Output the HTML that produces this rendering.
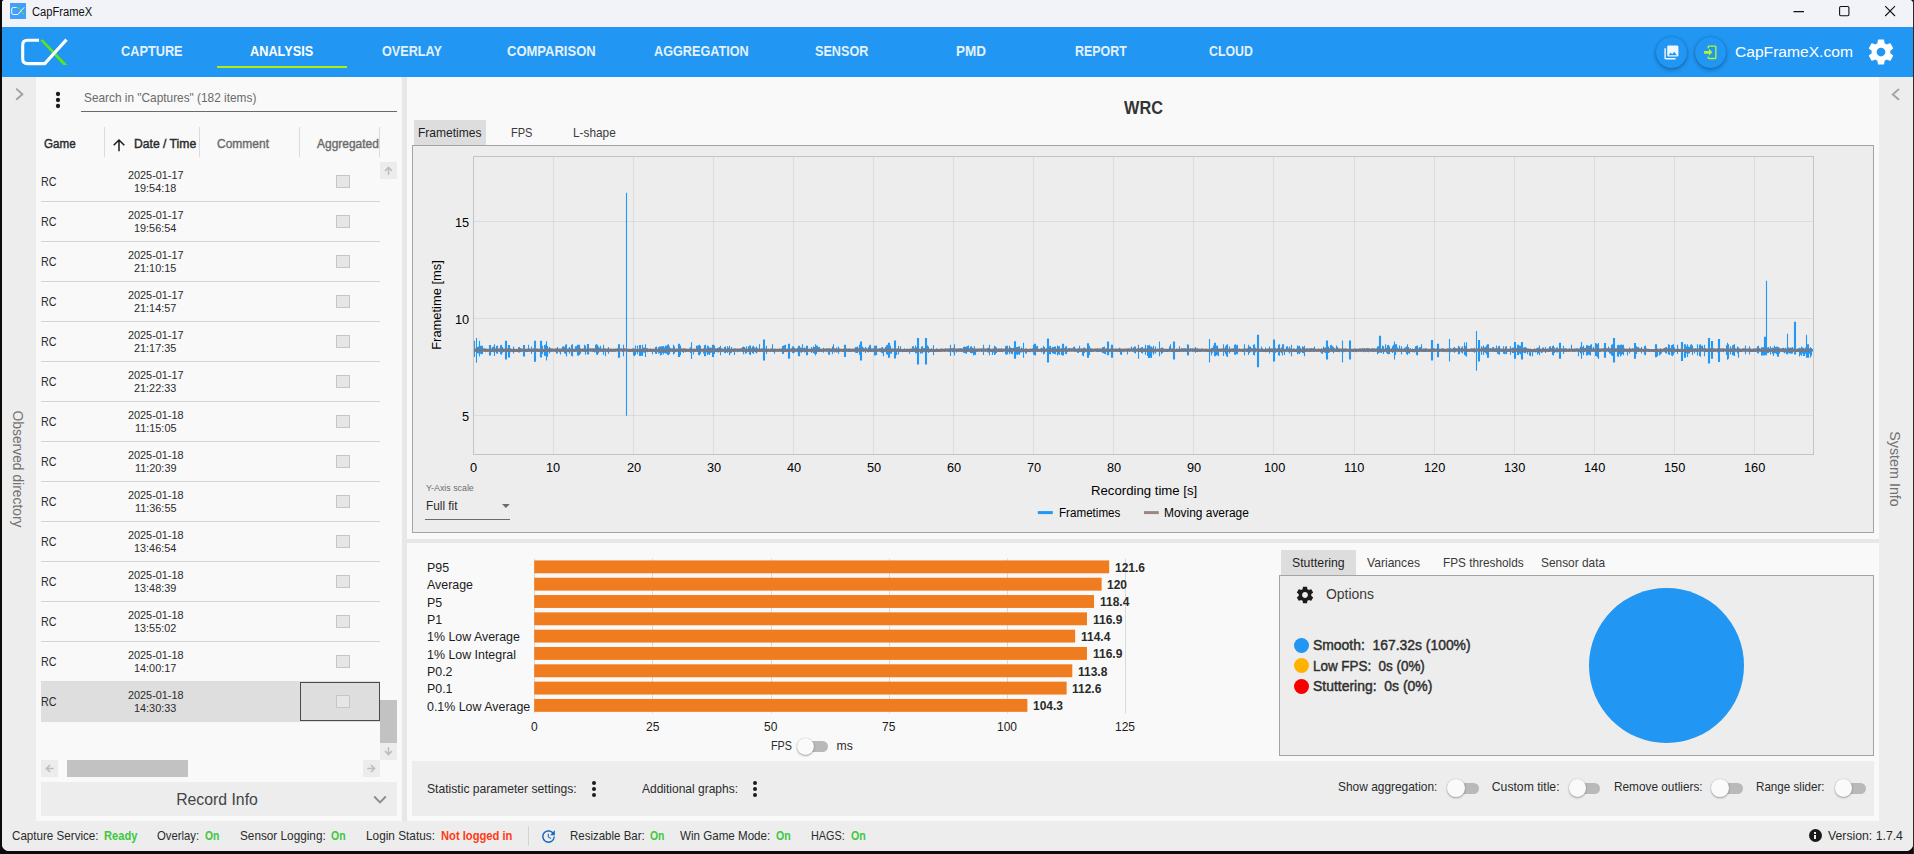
<!DOCTYPE html>
<html><head><meta charset="utf-8"><title>CapFrameX</title>
<style>
html,body{margin:0;padding:0;}
body{width:1914px;height:854px;overflow:hidden;background:#0d0b0a;font-family:"Liberation Sans",sans-serif;position:relative;}
#win{position:absolute;left:2px;top:0;width:1911px;height:851px;background:#f9f9f9;border-radius:3px 4px 7px 7px;overflow:hidden;}
#root{position:absolute;left:-2px;top:0;width:1914px;height:854px;}
.b{position:absolute;box-sizing:border-box;}
.t{position:absolute;white-space:pre;line-height:1;transform-origin:0 0;}
svg{position:absolute;overflow:visible;}
</style></head><body><div class="b" style="left:1913px;top:0;width:1px;height:854px;background:#2c2a26"></div><div id="win"><div id="root">

<div class="b" style="left:0px;top:0px;width:1914px;height:27px;background:#f1f3f8;"></div>
<div class="b" style="left:10px;top:3px;width:16px;height:16px;background:#429ffb;"></div>
<svg style="left:10px;top:3px" width="16" height="16" viewBox="0 0 16 16"><path d="M7.2 4.6l.9-.1 5.9 7" fill="none" stroke="#63e02a" stroke-width="1.150"/><path d="M6.6 4.500H3.300Q1.700 4.500 1.700 6v4q0 1.500 1.600 1.500h4.600L14.200 4.300" fill="none" stroke="#fff" stroke-width="0.950"/></svg>
<span class="t" style="left:32.20px;top:6.00px;font-size:12px;color:#111;transform:scaleX(0.9290);">CapFrameX</span>
<svg style="left:1780px;top:0" width="134" height="27" viewBox="0 0 134 27"><g fill="none" stroke="#111" stroke-width="1.1"><path d="M13.5 11.6h10.5"/><rect x="59.6" y="6.5" width="9.3" height="9.3" rx="1.2"/><path d="M105.2 6.2l9.8 9.8M115 6.2l-9.8 9.8"/></g></svg>
<div class="b" style="left:0px;top:27px;width:1914px;height:50px;background:#2196f3;"></div>
<svg style="left:0;top:27px" width="90" height="50" viewBox="0 27 90 50"><path d="M40.3 40.6l2.3-1.3 24.8 25.6h-4.2z" fill="#5be51e"/><path d="M39 40.2H27.5q-4.8 0-4.8 4.8v13.8q0 4.8 4.8 4.8h17.3L66.5 39.6" fill="none" stroke="#fff" stroke-width="3.1" stroke-linejoin="miter"/></svg>
<span class="t" style="left:121.40px;top:44.00px;font-size:14.6px;color:#e3f1fd;font-weight:bold;transform:scaleX(0.8729);">CAPTURE</span>
<span class="t" style="left:250.20px;top:44.00px;font-size:14.6px;color:#fff;font-weight:bold;transform:scaleX(0.8719);">ANALYSIS</span>
<span class="t" style="left:381.60px;top:44.00px;font-size:14.6px;color:#e3f1fd;font-weight:bold;transform:scaleX(0.8651);">OVERLAY</span>
<span class="t" style="left:507.00px;top:44.00px;font-size:14.6px;color:#e3f1fd;font-weight:bold;transform:scaleX(0.8915);">COMPARISON</span>
<span class="t" style="left:654.00px;top:44.00px;font-size:14.6px;color:#e3f1fd;font-weight:bold;transform:scaleX(0.8670);">AGGREGATION</span>
<span class="t" style="left:814.60px;top:44.00px;font-size:14.6px;color:#e3f1fd;font-weight:bold;transform:scaleX(0.8660);">SENSOR</span>
<span class="t" style="left:956.00px;top:44.00px;font-size:14.6px;color:#e3f1fd;font-weight:bold;transform:scaleX(0.9246);">PMD</span>
<span class="t" style="left:1074.80px;top:44.00px;font-size:14.6px;color:#e3f1fd;font-weight:bold;transform:scaleX(0.8514);">REPORT</span>
<span class="t" style="left:1208.60px;top:44.00px;font-size:14.6px;color:#e3f1fd;font-weight:bold;transform:scaleX(0.8438);">CLOUD</span>
<div class="b" style="left:217px;top:66px;width:130px;height:2px;background:#b0ec12;"></div>
<div class="b" style="left:1655.5px;top:36.700px;width:31px;height:31px;border-radius:15.500px;background:#2196f3;box-shadow:0 1.500px 4.500px rgba(0,0,0,.32),0 0 1.500px rgba(0,0,0,.18)"></div>
<div class="b" style="left:1694.5px;top:36.700px;width:31px;height:31px;border-radius:15.500px;background:#2196f3;box-shadow:0 1.500px 4.500px rgba(0,0,0,.32),0 0 1.500px rgba(0,0,0,.18)"></div>
<svg style="left:1662.600px;top:43.600px" width="16.800" height="16.800" viewBox="0 0 24 24"><path fill="#f2f8ff" d="M22 16V4c0-1.100-.9-2-2-2H8c-1.100 0-2 .9-2 2v12c0 1.100.9 2 2 2h12c1.100 0 2-.9 2-2zm-11-4l2.030 2.710L16 11l4 5H8l3-4zM2 6v14c0 1.100.9 2 2 2h14v-2H4V6H2z"/></svg>
<svg style="left:1701.700px;top:43.700px" width="16.600" height="16.600" viewBox="0 0 24 24"><path fill="#b6f52a" d="M10 17v-3H3v-4h7V7l5 5-5 5M10 2h9a2 2 0 0 1 2 2v16a2 2 0 0 1-2 2h-9a2 2 0 0 1-2-2v-2h2v2h9V4h-9v2H8V4a2 2 0 0 1 2-2z"/></svg>
<span class="t" style="left:1734.90px;top:44.00px;font-size:15.2px;color:#fff;transform:scaleX(1.0272);">CapFrameX.com</span>
<svg style="left:1866px;top:37px" width="30" height="30" viewBox="0 0 24 24"><path fill="#fff" d="M19.430 12.980c.040-.320.070-.640.070-.980s-.030-.660-.070-.980l2.110-1.650c.190-.150.240-.420.120-.640l-2-3.460c-.120-.220-.390-.300-.610-.220l-2.490 1c-.520-.400-1.080-.730-1.690-.980l-.380-2.650C14.460 2.180 14.250 2 14 2h-4c-.250 0-.460.180-.490.420l-.380 2.650c-.610.250-1.170.590-1.690.980l-2.490-1c-.230-.090-.490 0-.610.220l-2 3.460c-.130.220-.070.490.120.640l2.110 1.650c-.040.320-.070.650-.070.980s.030.660.070.980l-2.110 1.650c-.190.150-.240.420-.120.640l2 3.460c.120.220.390.300.610.220l2.490-1c.520.400 1.080.730 1.690.980l.380 2.650c.030.240.240.420.490.420h4c.250 0 .460-.180.490-.420l.380-2.650c.610-.250 1.170-.590 1.690-.980l2.490 1c.230.090.490 0 .610-.220l2-3.460c.120-.220.070-.490-.120-.640l-2.110-1.650zM12 15.500c-1.930 0-3.500-1.570-3.500-3.500s1.570-3.500 3.500-3.500 3.500 1.570 3.500 3.500-1.570 3.500-3.500 3.500z"/></svg>
<div class="b" style="left:0px;top:77px;width:36px;height:744px;background:#ededed;"></div>
<div class="b" style="left:1879px;top:77px;width:35px;height:744px;background:#ededed;"></div>
<svg style="left:0;top:77px" width="36" height="40" viewBox="0 77 36 40"><path d="M16.200 88.600l6.200 5.600-6.200 5.600" fill="none" stroke="#a2a2a2" stroke-width="1.9"/></svg>
<svg style="left:1879px;top:77px" width="35" height="40" viewBox="1879 77 35 40"><path d="M1899 89l-6.200 5.400 6.200 5.400" fill="none" stroke="#a2a2a2" stroke-width="1.9"/></svg>
<span class="t" style="left:18.300px;top:468.900px;font-size:14px;color:#727272;transform:translate(-50%,-50%) rotate(90deg) scaleX(0.989);transform-origin:50% 50%;">Observed directory</span>
<span class="t" style="left:1894.500px;top:469px;font-size:14px;color:#727272;transform:translate(-50%,-50%) rotate(90deg) scaleX(1.022);transform-origin:50% 50%;">System Info</span>
<div class="b" style="left:402px;top:77px;width:5px;height:744px;background:#e7e7e7;"></div>
<div class="b" style="left:407px;top:539px;width:1472px;height:4px;background:#e7e7e7;"></div>
<div class="b" style="left:0px;top:821px;width:1914px;height:33px;background:#ededed;"></div>
<svg style="left:54px;top:90px" width="8" height="8"><circle cx="4" cy="4" r="2.150" fill="#1c1c1c"/></svg>
<svg style="left:54px;top:96px" width="8" height="8"><circle cx="4" cy="4" r="2.150" fill="#1c1c1c"/></svg>
<svg style="left:54px;top:102px" width="8" height="8"><circle cx="4" cy="4" r="2.150" fill="#1c1c1c"/></svg>
<span class="t" style="left:84.00px;top:92.00px;font-size:12.2px;color:#6a6a6a;transform:scaleX(0.9718);">Search in "Captures" (182 items)</span>
<div class="b" style="left:81px;top:111px;width:316px;height:1px;background:#6b6b6b;"></div>
<div class="b" style="left:104px;top:127px;width:1px;height:30px;background:#dcdcdc;"></div>
<div class="b" style="left:199px;top:127px;width:1px;height:30px;background:#dcdcdc;"></div>
<div class="b" style="left:299px;top:127px;width:1px;height:30px;background:#dcdcdc;"></div>
<div class="b" style="left:379px;top:127px;width:1px;height:30px;background:#dcdcdc;"></div>
<span class="t" style="left:43.50px;top:138.00px;font-size:12.1px;color:#2b2b2b;transform:scaleX(0.9620);-webkit-text-stroke:0.400px #2b2b2b;">Game</span>
<svg style="left:112.300px;top:137.500px" width="14" height="14" viewBox="0 0 14 14"><path d="M7 13.200V2.200M1.700 7.300L7 2l5.300 5.300" fill="none" stroke="#1c1c1c" stroke-width="1.500"/></svg>
<span class="t" style="left:133.60px;top:138.00px;font-size:12.1px;color:#2b2b2b;transform:scaleX(1.0054);-webkit-text-stroke:0.400px #2b2b2b;">Date / Time</span>
<span class="t" style="left:216.50px;top:138.00px;font-size:12.1px;color:#6c6c6c;transform:scaleX(0.9914);-webkit-text-stroke:0.400px #6c6c6c;">Comment</span>
<span class="t" style="left:316.60px;top:138.00px;font-size:12.1px;color:#6c6c6c;transform:scaleX(0.9893);-webkit-text-stroke:0.400px #6c6c6c;">Aggregated</span>
<div class="b" style="left:41px;top:201px;width:339px;height:1px;background:#d4d4d4;"></div>
<span class="t" style="left:40.70px;top:176.00px;font-size:12.6px;color:#2b2b2b;transform:scaleX(0.8517);">RC</span>
<span class="t" style="left:127.51px;top:170.00px;font-size:10.6px;color:#2b2b2b;transform:scaleX(1.0250);">2025-01-17</span>
<span class="t" style="left:134.15px;top:183.00px;font-size:10.6px;color:#2b2b2b;transform:scaleX(1.0250);">19:54:18</span>
<div class="b" style="left:336px;top:175px;width:14px;height:13px;background:#e6e6e6;border:1px solid #c6c6c6;"></div>
<div class="b" style="left:41px;top:241px;width:339px;height:1px;background:#d4d4d4;"></div>
<span class="t" style="left:40.70px;top:216.00px;font-size:12.6px;color:#2b2b2b;transform:scaleX(0.8517);">RC</span>
<span class="t" style="left:127.51px;top:210.00px;font-size:10.6px;color:#2b2b2b;transform:scaleX(1.0250);">2025-01-17</span>
<span class="t" style="left:134.15px;top:223.00px;font-size:10.6px;color:#2b2b2b;transform:scaleX(1.0250);">19:56:54</span>
<div class="b" style="left:336px;top:215px;width:14px;height:13px;background:#e6e6e6;border:1px solid #c6c6c6;"></div>
<div class="b" style="left:41px;top:281px;width:339px;height:1px;background:#d4d4d4;"></div>
<span class="t" style="left:40.70px;top:256.00px;font-size:12.6px;color:#2b2b2b;transform:scaleX(0.8517);">RC</span>
<span class="t" style="left:127.51px;top:250.00px;font-size:10.6px;color:#2b2b2b;transform:scaleX(1.0250);">2025-01-17</span>
<span class="t" style="left:134.15px;top:263.00px;font-size:10.6px;color:#2b2b2b;transform:scaleX(1.0250);">21:10:15</span>
<div class="b" style="left:336px;top:255px;width:14px;height:13px;background:#e6e6e6;border:1px solid #c6c6c6;"></div>
<div class="b" style="left:41px;top:321px;width:339px;height:1px;background:#d4d4d4;"></div>
<span class="t" style="left:40.70px;top:296.00px;font-size:12.6px;color:#2b2b2b;transform:scaleX(0.8517);">RC</span>
<span class="t" style="left:127.51px;top:290.00px;font-size:10.6px;color:#2b2b2b;transform:scaleX(1.0250);">2025-01-17</span>
<span class="t" style="left:134.15px;top:303.00px;font-size:10.6px;color:#2b2b2b;transform:scaleX(1.0250);">21:14:57</span>
<div class="b" style="left:336px;top:295px;width:14px;height:13px;background:#e6e6e6;border:1px solid #c6c6c6;"></div>
<div class="b" style="left:41px;top:361px;width:339px;height:1px;background:#d4d4d4;"></div>
<span class="t" style="left:40.70px;top:336.00px;font-size:12.6px;color:#2b2b2b;transform:scaleX(0.8517);">RC</span>
<span class="t" style="left:127.51px;top:330.00px;font-size:10.6px;color:#2b2b2b;transform:scaleX(1.0250);">2025-01-17</span>
<span class="t" style="left:134.15px;top:343.00px;font-size:10.6px;color:#2b2b2b;transform:scaleX(1.0250);">21:17:35</span>
<div class="b" style="left:336px;top:335px;width:14px;height:13px;background:#e6e6e6;border:1px solid #c6c6c6;"></div>
<div class="b" style="left:41px;top:401px;width:339px;height:1px;background:#d4d4d4;"></div>
<span class="t" style="left:40.70px;top:376.00px;font-size:12.6px;color:#2b2b2b;transform:scaleX(0.8517);">RC</span>
<span class="t" style="left:127.51px;top:370.00px;font-size:10.6px;color:#2b2b2b;transform:scaleX(1.0250);">2025-01-17</span>
<span class="t" style="left:134.15px;top:383.00px;font-size:10.6px;color:#2b2b2b;transform:scaleX(1.0250);">21:22:33</span>
<div class="b" style="left:336px;top:375px;width:14px;height:13px;background:#e6e6e6;border:1px solid #c6c6c6;"></div>
<div class="b" style="left:41px;top:441px;width:339px;height:1px;background:#d4d4d4;"></div>
<span class="t" style="left:40.70px;top:416.00px;font-size:12.6px;color:#2b2b2b;transform:scaleX(0.8517);">RC</span>
<span class="t" style="left:127.51px;top:410.00px;font-size:10.6px;color:#2b2b2b;transform:scaleX(1.0250);">2025-01-18</span>
<span class="t" style="left:134.56px;top:423.00px;font-size:10.6px;color:#2b2b2b;transform:scaleX(1.0250);">11:15:05</span>
<div class="b" style="left:336px;top:415px;width:14px;height:13px;background:#e6e6e6;border:1px solid #c6c6c6;"></div>
<div class="b" style="left:41px;top:481px;width:339px;height:1px;background:#d4d4d4;"></div>
<span class="t" style="left:40.70px;top:456.00px;font-size:12.6px;color:#2b2b2b;transform:scaleX(0.8517);">RC</span>
<span class="t" style="left:127.51px;top:450.00px;font-size:10.6px;color:#2b2b2b;transform:scaleX(1.0250);">2025-01-18</span>
<span class="t" style="left:134.56px;top:463.00px;font-size:10.6px;color:#2b2b2b;transform:scaleX(1.0250);">11:20:39</span>
<div class="b" style="left:336px;top:455px;width:14px;height:13px;background:#e6e6e6;border:1px solid #c6c6c6;"></div>
<div class="b" style="left:41px;top:521px;width:339px;height:1px;background:#d4d4d4;"></div>
<span class="t" style="left:40.70px;top:496.00px;font-size:12.6px;color:#2b2b2b;transform:scaleX(0.8517);">RC</span>
<span class="t" style="left:127.51px;top:490.00px;font-size:10.6px;color:#2b2b2b;transform:scaleX(1.0250);">2025-01-18</span>
<span class="t" style="left:134.56px;top:503.00px;font-size:10.6px;color:#2b2b2b;transform:scaleX(1.0250);">11:36:55</span>
<div class="b" style="left:336px;top:495px;width:14px;height:13px;background:#e6e6e6;border:1px solid #c6c6c6;"></div>
<div class="b" style="left:41px;top:561px;width:339px;height:1px;background:#d4d4d4;"></div>
<span class="t" style="left:40.70px;top:536.00px;font-size:12.6px;color:#2b2b2b;transform:scaleX(0.8517);">RC</span>
<span class="t" style="left:127.51px;top:530.00px;font-size:10.6px;color:#2b2b2b;transform:scaleX(1.0250);">2025-01-18</span>
<span class="t" style="left:134.15px;top:543.00px;font-size:10.6px;color:#2b2b2b;transform:scaleX(1.0250);">13:46:54</span>
<div class="b" style="left:336px;top:535px;width:14px;height:13px;background:#e6e6e6;border:1px solid #c6c6c6;"></div>
<div class="b" style="left:41px;top:601px;width:339px;height:1px;background:#d4d4d4;"></div>
<span class="t" style="left:40.70px;top:576.00px;font-size:12.6px;color:#2b2b2b;transform:scaleX(0.8517);">RC</span>
<span class="t" style="left:127.51px;top:570.00px;font-size:10.6px;color:#2b2b2b;transform:scaleX(1.0250);">2025-01-18</span>
<span class="t" style="left:134.15px;top:583.00px;font-size:10.6px;color:#2b2b2b;transform:scaleX(1.0250);">13:48:39</span>
<div class="b" style="left:336px;top:575px;width:14px;height:13px;background:#e6e6e6;border:1px solid #c6c6c6;"></div>
<div class="b" style="left:41px;top:641px;width:339px;height:1px;background:#d4d4d4;"></div>
<span class="t" style="left:40.70px;top:616.00px;font-size:12.6px;color:#2b2b2b;transform:scaleX(0.8517);">RC</span>
<span class="t" style="left:127.51px;top:610.00px;font-size:10.6px;color:#2b2b2b;transform:scaleX(1.0250);">2025-01-18</span>
<span class="t" style="left:134.15px;top:623.00px;font-size:10.6px;color:#2b2b2b;transform:scaleX(1.0250);">13:55:02</span>
<div class="b" style="left:336px;top:615px;width:14px;height:13px;background:#e6e6e6;border:1px solid #c6c6c6;"></div>
<div class="b" style="left:41px;top:681px;width:339px;height:1px;background:#d4d4d4;"></div>
<span class="t" style="left:40.70px;top:656.00px;font-size:12.6px;color:#2b2b2b;transform:scaleX(0.8517);">RC</span>
<span class="t" style="left:127.51px;top:650.00px;font-size:10.6px;color:#2b2b2b;transform:scaleX(1.0250);">2025-01-18</span>
<span class="t" style="left:134.15px;top:663.00px;font-size:10.6px;color:#2b2b2b;transform:scaleX(1.0250);">14:00:17</span>
<div class="b" style="left:336px;top:655px;width:14px;height:13px;background:#e6e6e6;border:1px solid #c6c6c6;"></div>
<div class="b" style="left:41px;top:681px;width:339px;height:41px;background:#dedede;"></div>
<div class="b" style="left:300px;top:682px;width:80px;height:39px;border:1px solid #4a4a4a;"></div>
<span class="t" style="left:40.70px;top:696.00px;font-size:12.6px;color:#2b2b2b;transform:scaleX(0.8517);">RC</span>
<span class="t" style="left:127.51px;top:690.00px;font-size:10.6px;color:#2b2b2b;transform:scaleX(1.0250);">2025-01-18</span>
<span class="t" style="left:134.15px;top:703.00px;font-size:10.6px;color:#2b2b2b;transform:scaleX(1.0250);">14:30:33</span>
<div class="b" style="left:336px;top:695px;width:14px;height:13px;background:#e6e6e6;border:1px solid #c6c6c6;"></div>
<div class="b" style="left:380px;top:162px;width:17px;height:17px;background:#ececec;"></div>
<div class="b" style="left:380px;top:743px;width:17px;height:17px;background:#ececec;"></div>
<div class="b" style="left:380px;top:700px;width:17px;height:43px;background:#c2c2c2;"></div>
<svg style="left:380px;top:162px" width="17" height="17" viewBox="0 0 17 17"><path d="M8.500 12.700V5.600M5 9.100l3.500-3.700L12 9.100" fill="none" stroke="#bcbcbc" stroke-width="1.500"/></svg>
<svg style="left:380px;top:743px" width="17" height="17" viewBox="0 0 17 17"><path d="M8.500 4.300v7.100M5 7.900l3.500 3.700L12 7.900" fill="none" stroke="#bcbcbc" stroke-width="1.500"/></svg>
<div class="b" style="left:41px;top:760px;width:17px;height:17px;background:#ececec;"></div>
<div class="b" style="left:363px;top:760px;width:17px;height:17px;background:#ececec;"></div>
<div class="b" style="left:67px;top:760px;width:121px;height:17px;background:#c2c2c2;"></div>
<svg style="left:41px;top:760px" width="17" height="17" viewBox="0 0 17 17"><path d="M12.700 8.500H5.600M9.100 5L5.400 8.500 9.100 12" fill="none" stroke="#bcbcbc" stroke-width="1.500"/></svg>
<svg style="left:363px;top:760px" width="17" height="17" viewBox="0 0 17 17"><path d="M4.300 8.500h7.100M7.900 5l3.700 3.500L7.900 12" fill="none" stroke="#bcbcbc" stroke-width="1.500"/></svg>
<div class="b" style="left:41px;top:782px;width:356px;height:34px;background:#ededed;"></div>
<span class="t" style="left:176.16px;top:792.00px;font-size:15.8px;color:#444;">Record Info</span>
<svg style="left:370px;top:790px" width="20" height="20" viewBox="0 0 20 20"><path d="M4.200 6.500l5.800 5.800 5.800-5.800" fill="none" stroke="#8c8c8c" stroke-width="1.900"/></svg>
<span class="t" style="left:1123.55px;top:99.00px;font-size:18px;color:#343434;font-weight:bold;transform:scaleX(0.9050);">WRC</span>
<div class="b" style="left:414px;top:120px;width:72px;height:25px;background:#dddddd;"></div>
<span class="t" style="left:418.00px;top:127.00px;font-size:12.2px;color:#1f1f1f;transform:scaleX(0.9876);">Frametimes</span>
<span class="t" style="left:511.20px;top:127.00px;font-size:12.2px;color:#3a3a3a;transform:scaleX(0.9061);">FPS</span>
<span class="t" style="left:572.60px;top:127.00px;font-size:12.2px;color:#3a3a3a;transform:scaleX(0.9707);">L-shape</span>
<div class="b" style="left:412px;top:145px;width:1462px;height:388px;background:#ededed;border:1px solid #a3a3a3;"></div>
<svg style="left:0;top:0" width="1914" height="600" viewBox="0 0 1914 600"><path d="M553.5 156V454M633.5 156V454M713.5 156V454M793.5 156V454M873.5 156V454M953.5 156V454M1033.5 156V454M1113.5 156V454M1193.5 156V454M1273.5 156V454M1354.5 156V454M1434.5 156V454M1514.5 156V454M1594.5 156V454M1674.5 156V454M1754.5 156V454" stroke="#000" stroke-opacity="0.072" stroke-width="1" fill="none"/><path d="M473 415.5H1813M473 318.5H1813M473 221.5H1813" stroke="#000" stroke-opacity="0.072" stroke-width="1" fill="none"/><path d="M473.5 340.8V357.0M474.5 340.8V357.0M475.5 349.1V351.8M476.5 337.9V362.7M477.5 347.0V353.3M478.5 346.6V353.6M479.5 340.8V356.5M480.5 345.8V353.8M481.5 345.8V354.2M482.5 345.8V354.0M483.5 348.4V351.2M484.5 348.6V351.2M485.5 348.6V352.2M486.5 349.0V351.5M487.5 349.3V351.6M488.5 349.2V351.2M489.5 345.0V355.4M490.5 345.0V355.4M491.5 348.7V352.1M492.5 347.0V352.0M493.5 346.6V352.2M494.5 344.2V355.9M495.5 348.5V351.7M496.5 345.9V353.4M497.5 345.4V353.7M498.5 349.1V351.5M499.5 348.7V352.1M500.5 345.3V354.3M501.5 344.8V354.7M502.5 347.0V352.7M503.5 348.9V351.9M504.5 349.0V351.8M505.5 340.8V359.6M506.5 340.8V359.6M507.5 348.6V352.0M508.5 345.0V357.5M509.5 345.0V357.5M510.5 348.5V352.2M511.5 348.8V351.3M512.5 348.9V352.0M513.5 346.6V353.5M514.5 348.6V351.1M515.5 348.9V351.8M516.5 349.2V351.5M517.5 349.1V352.1M518.5 347.3V352.4M519.5 347.0V352.6M520.5 348.3V352.0M521.5 348.2V351.8M522.5 349.2V351.1M523.5 345.0V356.5M524.5 345.0V356.5M525.5 349.0V351.7M526.5 349.2V352.1M527.5 348.7V352.1M528.5 344.8V351.7M529.5 348.4V351.3M530.5 349.2V351.2M531.5 346.6V354.0M532.5 348.7V351.9M533.5 348.6V351.7M534.5 340.8V361.7M535.5 340.8V361.7M536.5 348.8V351.6M537.5 348.6V351.6M538.5 349.2V352.0M539.5 348.9V351.4M540.5 340.8V357.5M541.5 340.8V357.5M542.5 345.8V353.9M543.5 349.2V352.1M544.5 345.0V355.7M545.5 344.4V355.9M546.5 341.3V360.6M547.5 346.1V356.8M548.5 348.4V351.2M549.5 347.0V353.5M550.5 348.2V351.4M551.5 348.6V351.7M552.5 348.6V351.4M553.5 349.3V351.1M554.5 348.7V351.4M555.5 348.6V351.8M556.5 348.2V353.8M557.5 347.0V353.3M558.5 348.8V351.2M559.5 348.7V352.2M560.5 349.3V354.6M561.5 348.7V351.4M562.5 346.6V351.2M563.5 346.2V351.3M564.5 347.0V353.2M565.5 344.8V353.9M566.5 344.2V356.4M567.5 349.1V351.7M568.5 348.4V352.0M569.5 347.0V353.8M570.5 348.8V351.2M571.5 344.8V355.8M572.5 344.2V356.4M573.5 349.2V351.4M574.5 349.1V351.9M575.5 346.2V351.5M576.5 346.2V351.2M577.5 344.8V355.6M578.5 344.8V355.8M579.5 344.8V355.1M580.5 348.2V353.8M581.5 349.2V351.2M582.5 349.0V351.5M583.5 348.6V351.4M584.5 344.8V352.1M585.5 345.8V354.8M586.5 349.2V352.1M587.5 343.9V354.4M588.5 343.9V354.4M589.5 349.2V351.2M590.5 348.3V351.4M591.5 349.1V351.5M592.5 348.4V351.8M593.5 348.7V351.9M594.5 348.5V352.6M595.5 344.8V351.7M596.5 344.2V354.6M597.5 344.8V355.1M598.5 346.6V353.3M599.5 347.8V351.4M600.5 345.8V351.7M601.5 348.7V351.5M602.5 348.7V352.0M603.5 344.8V354.7M604.5 348.2V351.2M605.5 348.4V356.2M606.5 349.0V351.2M607.5 348.5V352.1M608.5 347.0V353.8M609.5 349.0V351.2M610.5 348.5V351.2M611.5 349.1V351.4M612.5 349.3V351.7M613.5 349.0V351.4M614.5 349.0V351.7M615.5 349.3V351.6M616.5 349.2V351.3M617.5 348.6V351.2M618.5 344.2V357.7M619.5 344.2V357.7M620.5 348.9V351.1M621.5 348.4V351.2M622.5 349.1V351.9M623.5 344.8V356.2M624.5 348.3V351.2M625.5 349.2V351.1M626.5 192.8V415.8M627.5 349.0V351.2M628.5 349.1V352.1M629.5 349.3V351.8M630.5 348.9V351.5M631.5 349.3V351.4M632.5 348.2V351.2M633.5 348.6V355.6M634.5 348.4V356.2M635.5 345.4V354.9M636.5 348.9V351.6M637.5 345.8V353.9M638.5 349.3V351.9M639.5 345.0V355.9M640.5 345.0V355.9M641.5 349.2V355.6M642.5 344.8V355.9M643.5 347.7V352.4M644.5 347.4V352.7M645.5 344.2V357.0M646.5 348.2V351.4M647.5 348.2V352.2M648.5 349.2V351.6M649.5 349.0V351.7M650.5 348.5V352.0M651.5 349.0V351.4M652.5 349.0V354.2M653.5 348.9V351.5M654.5 349.0V352.0M655.5 347.0V353.7M656.5 346.6V354.1M657.5 349.2V351.7M658.5 347.3V353.5M659.5 346.4V353.2M660.5 346.4V355.5M661.5 346.2V355.1M662.5 346.3V353.0M663.5 346.1V354.6M664.5 347.3V352.9M665.5 345.4V353.6M666.5 345.8V353.6M667.5 344.8V354.8M668.5 344.2V355.3M669.5 346.6V354.1M670.5 348.3V351.4M671.5 348.6V351.2M672.5 348.5V352.1M673.5 344.8V354.5M674.5 346.6V353.6M675.5 349.3V352.0M676.5 348.7V351.8M677.5 348.7V351.6M678.5 343.7V356.9M679.5 343.7V356.9M680.5 345.4V355.3M681.5 348.6V351.1M682.5 349.0V351.9M683.5 348.6V353.0M684.5 348.4V351.3M685.5 348.8V352.2M686.5 349.1V352.0M687.5 349.2V351.5M688.5 349.1V352.1M689.5 348.4V351.3M690.5 347.3V353.0M691.5 342.2V359.0M692.5 348.9V351.5M693.5 349.0V354.6M694.5 348.7V351.9M695.5 349.0V351.7M696.5 345.8V351.5M697.5 345.8V351.9M698.5 345.3V355.0M699.5 344.8V355.6M700.5 345.8V354.1M701.5 349.2V351.5M702.5 349.1V351.1M703.5 348.5V353.4M704.5 345.3V356.2M705.5 344.8V356.2M706.5 348.7V352.6M707.5 345.4V354.9M708.5 346.2V354.1M709.5 347.7V355.0M710.5 347.4V353.0M711.5 347.8V352.5M712.5 344.8V356.9M713.5 344.8V356.9M714.5 345.4V354.1M715.5 348.6V351.9M716.5 348.8V352.0M717.5 348.0V352.3M718.5 347.8V352.6M719.5 347.0V351.9M720.5 345.8V355.2M721.5 348.6V352.1M722.5 348.5V351.5M723.5 349.1V351.1M724.5 347.0V353.0M725.5 346.6V353.3M726.5 348.9V352.1M727.5 346.2V353.1M728.5 347.8V352.1M729.5 345.8V355.2M730.5 349.2V353.4M731.5 347.0V352.7M732.5 348.8V351.2M733.5 349.2V352.0M734.5 348.4V355.0M735.5 348.5V351.6M736.5 348.9V351.4M737.5 349.1V352.2M738.5 349.2V351.8M739.5 349.3V351.7M740.5 348.8V351.7M741.5 348.5V351.4M742.5 347.0V351.9M743.5 346.6V354.3M744.5 347.0V351.8M745.5 348.8V353.8M746.5 346.2V353.3M747.5 348.9V351.9M748.5 346.6V351.9M749.5 345.4V354.4M750.5 345.4V355.0M751.5 348.3V351.5M752.5 346.6V352.9M753.5 345.8V354.1M754.5 347.4V351.9M755.5 347.8V352.3M756.5 346.6V353.4M757.5 348.2V352.2M758.5 348.8V351.3M759.5 344.2V352.0M760.5 349.1V351.8M761.5 348.4V351.6M762.5 348.5V351.8M763.5 339.5V360.4M764.5 339.5V360.4M765.5 348.4V352.0M766.5 345.8V353.9M767.5 349.2V351.7M768.5 348.7V351.5M769.5 349.1V351.2M770.5 348.7V352.0M771.5 348.4V351.3M772.5 344.2V351.9M773.5 349.1V351.9M774.5 348.8V353.8M775.5 348.7V351.6M776.5 349.0V351.3M777.5 349.1V351.5M778.5 349.0V351.6M779.5 348.6V351.3M780.5 349.3V351.2M781.5 348.4V351.2M782.5 345.9V353.7M783.5 345.4V354.1M784.5 345.3V351.9M785.5 344.8V352.1M786.5 349.0V351.4M787.5 348.4V351.1M788.5 343.7V358.8M789.5 343.7V358.8M790.5 348.9V351.3M791.5 348.3V351.2M792.5 346.6V353.1M793.5 346.2V353.5M794.5 347.8V352.4M795.5 348.4V351.6M796.5 348.9V351.2M797.5 347.7V352.2M798.5 345.8V356.2M799.5 345.8V356.2M800.5 347.4V352.2M801.5 347.8V352.7M802.5 344.2V351.9M803.5 348.3V351.4M804.5 347.4V352.6M805.5 348.2V352.0M806.5 345.8V355.2M807.5 345.8V355.2M808.5 349.1V352.0M809.5 348.8V351.4M810.5 349.0V351.8M811.5 347.0V352.9M812.5 348.3V351.5M813.5 346.2V353.3M814.5 347.0V353.7M815.5 344.2V355.4M816.5 345.4V354.0M817.5 345.8V352.0M818.5 347.3V352.1M819.5 347.0V351.7M820.5 348.7V351.5M821.5 349.0V352.1M822.5 348.9V351.6M823.5 347.8V352.8M824.5 348.7V351.3M825.5 349.0V351.2M826.5 348.6V351.8M827.5 348.4V351.5M828.5 348.9V354.6M829.5 348.3V355.0M830.5 349.2V351.5M831.5 349.2V352.1M832.5 346.6V354.2M833.5 344.2V351.7M834.5 348.2V352.6M835.5 349.0V351.8M836.5 347.4V352.6M837.5 348.4V352.1M838.5 346.6V353.7M839.5 348.5V352.0M840.5 348.9V351.1M841.5 349.0V351.2M842.5 348.9V351.9M843.5 348.8V352.1M844.5 344.8V356.9M845.5 344.8V356.9M846.5 348.4V351.4M847.5 348.8V351.6M848.5 348.7V351.8M849.5 348.3V351.7M850.5 349.2V351.9M851.5 349.0V351.4M852.5 348.8V351.3M853.5 349.1V351.8M854.5 348.7V351.6M855.5 347.0V352.7M856.5 347.0V353.0M857.5 346.6V353.0M858.5 348.5V351.5M859.5 344.8V355.0M860.5 341.6V360.4M861.5 341.6V360.4M862.5 346.6V351.2M863.5 347.8V352.0M864.5 348.8V351.1M865.5 347.0V352.9M866.5 348.2V351.1M867.5 349.0V352.0M868.5 347.0V352.6M869.5 345.3V351.6M870.5 344.8V351.8M871.5 348.4V352.1M872.5 348.4V351.7M873.5 348.4V351.5M874.5 345.8V355.6M875.5 345.8V355.6M876.5 345.4V355.0M877.5 348.8V351.5M878.5 348.8V351.2M879.5 348.2V351.1M880.5 348.6V352.1M881.5 347.4V352.8M882.5 347.0V353.3M883.5 348.7V356.2M884.5 348.7V352.1M885.5 347.0V351.4M886.5 345.3V354.3M887.5 344.8V354.7M888.5 342.7V357.7M889.5 342.7V357.7M890.5 345.8V353.4M891.5 348.8V353.8M892.5 348.3V351.6M893.5 349.1V351.3M894.5 340.6V358.4M895.5 340.6V358.4M896.5 348.8V355.0M897.5 348.6V351.2M898.5 345.8V354.4M899.5 348.9V352.0M900.5 346.2V351.6M901.5 348.9V351.4M902.5 348.9V352.2M903.5 349.0V351.5M904.5 348.2V351.1M905.5 349.0V351.7M906.5 348.8V352.0M907.5 348.8V351.1M908.5 349.3V351.2M909.5 348.7V353.8M910.5 348.8V351.8M911.5 348.7V352.0M912.5 346.2V352.0M913.5 346.2V352.1M914.5 348.3V351.6M915.5 345.4V353.6M916.5 347.3V352.9M917.5 337.9V364.6M918.5 337.9V364.6M919.5 348.7V351.6M920.5 349.1V353.4M921.5 346.6V353.2M922.5 346.2V353.5M923.5 348.3V351.7M924.5 348.0V352.3M925.5 337.9V364.6M926.5 337.9V364.6M927.5 345.4V352.1M928.5 346.6V353.0M929.5 349.3V352.1M930.5 348.9V352.1M931.5 348.2V351.6M932.5 348.9V351.6M933.5 345.2V355.2M934.5 349.2V351.6M935.5 349.1V351.5M936.5 348.2V351.3M937.5 349.0V351.6M938.5 349.0V352.1M939.5 349.0V351.8M940.5 349.2V351.7M941.5 348.5V351.5M942.5 349.0V351.5M943.5 349.0V351.3M944.5 349.2V352.1M945.5 348.5V351.3M946.5 349.2V351.4M947.5 348.9V351.5M948.5 348.8V351.8M949.5 348.4V352.1M950.5 344.8V356.0M951.5 348.6V351.3M952.5 348.5V351.9M953.5 347.8V352.6M954.5 344.2V355.6M955.5 348.9V351.1M956.5 348.4V352.6M957.5 349.3V351.5M958.5 348.3V351.6M959.5 348.6V351.3M960.5 348.3V351.6M961.5 348.5V352.0M962.5 348.6V351.3M963.5 347.0V352.8M964.5 346.6V353.1M965.5 347.0V353.5M966.5 346.6V353.8M967.5 345.9V351.9M968.5 345.4V351.4M969.5 348.6V351.8M970.5 346.6V352.9M971.5 346.2V353.2M972.5 347.8V352.9M973.5 348.5V355.6M974.5 346.2V354.7M975.5 349.0V355.0M976.5 349.1V351.8M977.5 349.1V352.0M978.5 348.9V351.3M979.5 348.9V351.7M980.5 349.0V351.1M981.5 348.4V351.9M982.5 348.8V351.6M983.5 344.8V355.0M984.5 348.4V351.6M985.5 349.3V351.8M986.5 349.1V351.2M987.5 348.0V352.3M988.5 347.8V352.5M989.5 344.8V355.3M990.5 349.1V351.5M991.5 349.2V352.0M992.5 348.7V355.0M993.5 348.6V352.6M994.5 345.8V355.1M995.5 346.6V354.2M996.5 347.4V353.0M997.5 349.1V351.6M998.5 348.5V352.1M999.5 348.6V352.0M1000.5 348.7V352.0M1001.5 348.2V351.7M1002.5 348.7V352.2M1003.5 349.2V351.5M1004.5 349.2V351.1M1005.5 346.2V354.3M1006.5 345.8V354.8M1007.5 345.8V354.3M1008.5 348.8V352.0M1009.5 345.8V354.2M1010.5 347.4V352.5M1011.5 348.3V353.8M1012.5 348.0V354.2M1013.5 347.8V351.3M1014.5 341.2V358.8M1015.5 341.2V358.8M1016.5 347.0V354.5M1017.5 347.0V355.0M1018.5 346.6V354.3M1019.5 346.2V354.8M1020.5 348.7V352.6M1021.5 347.4V352.5M1022.5 348.3V352.1M1023.5 342.7V357.7M1024.5 348.7V351.8M1025.5 348.4V353.4M1026.5 348.2V353.8M1027.5 349.1V352.1M1028.5 348.9V351.9M1029.5 349.1V351.9M1030.5 348.6V352.2M1031.5 349.2V351.3M1032.5 348.2V351.5M1033.5 344.8V354.4M1034.5 343.7V355.2M1035.5 343.7V355.4M1036.5 346.2V351.6M1037.5 345.8V351.8M1038.5 349.0V351.8M1039.5 349.1V351.5M1040.5 348.6V351.5M1041.5 347.8V352.5M1042.5 348.2V351.5M1043.5 345.8V354.5M1044.5 347.0V353.7M1045.5 348.9V351.5M1046.5 348.3V351.3M1047.5 338.5V362.5M1048.5 338.5V362.5M1049.5 346.2V354.0M1050.5 345.8V354.5M1051.5 348.2V352.1M1052.5 347.0V353.3M1053.5 347.0V353.7M1054.5 346.6V354.1M1055.5 346.6V354.2M1056.5 348.5V351.2M1057.5 345.4V355.5M1058.5 346.2V354.3M1059.5 346.2V354.8M1060.5 348.7V351.3M1061.5 348.3V355.1M1062.5 343.7V355.6M1063.5 343.7V355.6M1064.5 348.3V351.5M1065.5 346.6V353.9M1066.5 346.2V354.3M1067.5 349.1V351.9M1068.5 348.6V351.5M1069.5 348.3V351.7M1070.5 348.6V351.1M1071.5 348.6V351.7M1072.5 348.5V351.2M1073.5 347.0V351.5M1074.5 346.6V351.7M1075.5 348.5V351.7M1076.5 348.9V351.6M1077.5 348.7V352.7M1078.5 348.5V353.0M1079.5 345.8V352.0M1080.5 348.7V351.7M1081.5 348.3V351.9M1082.5 348.8V355.6M1083.5 347.7V356.2M1084.5 347.4V352.9M1085.5 348.5V351.5M1086.5 348.8V351.8M1087.5 343.3V357.7M1088.5 343.3V357.7M1089.5 345.8V354.9M1090.5 348.3V351.9M1091.5 348.4V352.0M1092.5 348.7V351.7M1093.5 349.2V351.9M1094.5 349.1V351.3M1095.5 348.6V351.3M1096.5 349.1V352.1M1097.5 348.6V352.1M1098.5 348.9V352.0M1099.5 348.8V351.9M1100.5 348.9V351.8M1101.5 349.0V351.8M1102.5 347.3V352.9M1103.5 347.0V353.2M1104.5 346.6V353.8M1105.5 349.0V354.2M1106.5 348.6V352.0M1107.5 341.6V355.2M1108.5 341.6V355.2M1109.5 349.1V352.2M1110.5 348.6V351.5M1111.5 344.8V357.7M1112.5 344.8V357.7M1113.5 348.8V351.6M1114.5 348.8V351.6M1115.5 348.8V351.6M1116.5 348.4V351.8M1117.5 348.9V351.1M1118.5 348.7V351.9M1119.5 347.8V352.0M1120.5 348.7V354.5M1121.5 348.5V355.0M1122.5 348.9V351.2M1123.5 349.1V352.2M1124.5 348.7V351.2M1125.5 349.0V351.5M1126.5 349.0V351.4M1127.5 348.7V354.6M1128.5 348.5V351.3M1129.5 348.8V351.9M1130.5 349.3V351.2M1131.5 346.6V351.3M1132.5 348.8V352.1M1133.5 347.4V351.6M1134.5 346.6V353.1M1135.5 346.6V353.5M1136.5 349.2V351.2M1137.5 348.5V351.6M1138.5 344.8V358.8M1139.5 348.5V352.1M1140.5 348.0V351.9M1141.5 347.3V353.1M1142.5 347.0V353.4M1143.5 348.4V351.2M1144.5 348.3V351.7M1145.5 344.8V354.7M1146.5 348.5V351.3M1147.5 345.2V356.0M1148.5 345.6V357.9M1149.5 344.8V358.0M1150.5 346.6V357.5M1151.5 346.4V358.1M1152.5 347.8V352.4M1153.5 345.8V354.7M1154.5 348.9V352.6M1155.5 346.6V353.5M1156.5 349.2V351.6M1157.5 348.7V351.5M1158.5 349.1V351.2M1159.5 341.6V356.2M1160.5 348.4V351.7M1161.5 347.7V354.2M1162.5 347.4V352.9M1163.5 348.6V352.0M1164.5 349.2V351.4M1165.5 349.3V351.8M1166.5 348.9V352.0M1167.5 349.3V352.1M1168.5 349.2V351.4M1169.5 346.6V351.5M1170.5 344.2V351.1M1171.5 348.5V351.8M1172.5 348.4V352.0M1173.5 341.6V359.4M1174.5 341.6V359.4M1175.5 349.0V351.2M1176.5 348.4V351.8M1177.5 348.9V351.8M1178.5 348.7V351.9M1179.5 346.2V351.8M1180.5 349.0V351.7M1181.5 348.3V351.7M1182.5 348.3V351.2M1183.5 348.6V352.0M1184.5 348.3V351.4M1185.5 348.6V352.1M1186.5 349.0V351.8M1187.5 344.2V355.4M1188.5 344.8V355.3M1189.5 349.1V351.8M1190.5 348.3V351.5M1191.5 349.1V351.3M1192.5 348.4V352.1M1193.5 349.0V351.5M1194.5 348.4V351.8M1195.5 347.0V352.8M1196.5 348.6V351.9M1197.5 348.2V351.9M1198.5 349.2V351.9M1199.5 348.7V351.5M1200.5 349.0V351.9M1201.5 348.4V351.2M1202.5 348.5V351.1M1203.5 349.2V351.5M1204.5 349.1V351.8M1205.5 348.8V351.1M1206.5 349.1V352.1M1207.5 349.1V351.7M1208.5 349.0V352.0M1209.5 338.9V362.5M1210.5 348.9V352.2M1211.5 348.0V355.6M1212.5 347.8V352.7M1213.5 345.4V351.2M1214.5 342.7V356.2M1215.5 342.7V356.2M1216.5 345.8V355.2M1217.5 345.4V355.2M1218.5 349.1V356.2M1219.5 349.2V351.5M1220.5 348.9V352.0M1221.5 349.2V351.6M1222.5 348.7V351.5M1223.5 344.2V356.0M1224.5 348.4V351.9M1225.5 346.2V353.9M1226.5 344.8V356.2M1227.5 344.2V356.9M1228.5 349.1V351.9M1229.5 346.6V353.4M1230.5 349.0V352.0M1231.5 348.4V351.3M1232.5 348.5V351.7M1233.5 348.3V351.9M1234.5 344.8V354.5M1235.5 344.2V355.0M1236.5 345.3V353.9M1237.5 344.8V354.3M1238.5 349.2V351.6M1239.5 348.4V351.1M1240.5 349.2V351.3M1241.5 348.9V351.5M1242.5 349.1V352.0M1243.5 348.4V352.0M1244.5 344.2V355.4M1245.5 349.0V351.2M1246.5 348.9V352.1M1247.5 348.6V352.1M1248.5 344.8V355.0M1249.5 346.6V353.0M1250.5 346.6V352.1M1251.5 348.4V351.3M1252.5 348.4V351.4M1253.5 344.8V354.8M1254.5 344.2V355.4M1255.5 347.8V352.2M1256.5 348.8V351.1M1257.5 334.7V367.3M1258.5 334.7V367.3M1259.5 348.8V352.0M1260.5 349.2V351.7M1261.5 346.6V351.4M1262.5 348.2V351.6M1263.5 348.9V352.0M1264.5 349.2V351.1M1265.5 347.4V352.2M1266.5 348.7V351.2M1267.5 348.6V352.1M1268.5 348.6V351.3M1269.5 346.6V353.6M1270.5 348.5V352.1M1271.5 348.5V352.0M1272.5 348.4V352.2M1273.5 339.5V361.5M1274.5 339.5V361.5M1275.5 347.8V352.9M1276.5 349.3V351.6M1277.5 348.2V352.0M1278.5 344.8V355.2M1279.5 344.2V355.8M1280.5 348.4V352.1M1281.5 347.4V352.9M1282.5 344.2V355.6M1283.5 344.2V351.3M1284.5 349.2V355.0M1285.5 349.2V351.7M1286.5 346.6V351.4M1287.5 346.2V351.2M1288.5 348.6V352.2M1289.5 346.6V353.5M1290.5 348.6V351.8M1291.5 344.8V356.2M1292.5 349.3V351.8M1293.5 348.3V351.3M1294.5 348.5V351.4M1295.5 348.9V351.2M1296.5 348.6V352.1M1297.5 345.4V354.3M1298.5 346.2V353.6M1299.5 345.8V353.9M1300.5 347.8V352.5M1301.5 348.9V352.1M1302.5 346.2V353.0M1303.5 347.0V353.3M1304.5 345.8V356.2M1305.5 349.1V351.4M1306.5 348.6V351.8M1307.5 348.5V351.4M1308.5 349.2V351.2M1309.5 348.5V351.8M1310.5 348.3V352.1M1311.5 348.3V351.4M1312.5 348.5V351.3M1313.5 348.3V352.0M1314.5 346.6V351.5M1315.5 349.0V351.1M1316.5 349.1V351.8M1317.5 349.1V351.3M1318.5 348.6V351.7M1319.5 349.2V351.1M1320.5 349.2V352.2M1321.5 348.5V353.4M1322.5 349.0V353.8M1323.5 346.6V352.1M1324.5 347.8V352.6M1325.5 347.4V352.9M1326.5 340.6V359.4M1327.5 340.6V359.4M1328.5 346.6V353.1M1329.5 348.2V352.6M1330.5 345.3V351.3M1331.5 344.8V351.2M1332.5 346.2V351.8M1333.5 347.0V353.3M1334.5 348.3V351.8M1335.5 349.3V351.8M1336.5 345.4V351.9M1337.5 347.0V352.0M1338.5 348.8V351.9M1339.5 349.0V352.2M1340.5 349.0V351.3M1341.5 349.3V352.1M1342.5 340.6V362.5M1343.5 348.8V352.2M1344.5 349.1V352.0M1345.5 348.2V351.6M1346.5 348.9V351.5M1347.5 349.3V351.5M1348.5 349.3V351.8M1349.5 340.6V359.4M1350.5 340.6V359.4M1351.5 349.1V351.6M1352.5 349.0V351.7M1353.5 349.1V351.9M1354.5 348.5V351.2M1355.5 348.4V352.2M1356.5 349.2V351.9M1357.5 349.1V351.2M1358.5 349.0V351.8M1359.5 348.7V351.6M1360.5 348.7V351.8M1361.5 348.7V351.7M1362.5 348.6V351.4M1363.5 348.4V352.2M1364.5 348.2V351.4M1365.5 349.2V351.9M1366.5 348.3V351.6M1367.5 348.2V352.1M1368.5 348.2V352.2M1369.5 348.9V351.2M1370.5 348.9V351.9M1371.5 348.8V351.5M1372.5 348.6V352.1M1373.5 348.7V352.1M1374.5 348.6V351.6M1375.5 348.9V351.7M1376.5 348.5V351.4M1377.5 346.6V354.2M1378.5 346.2V353.3M1379.5 335.8V352.4M1380.5 335.8V352.4M1381.5 348.5V353.0M1382.5 345.4V351.7M1383.5 346.2V354.1M1384.5 349.0V352.0M1385.5 344.2V351.6M1386.5 347.8V352.7M1387.5 345.3V353.9M1388.5 344.8V354.3M1389.5 346.2V353.9M1390.5 349.2V351.4M1391.5 348.6V351.9M1392.5 346.2V353.1M1393.5 344.8V351.9M1394.5 341.6V359.4M1395.5 344.2V354.9M1396.5 344.2V351.1M1397.5 347.4V352.2M1398.5 348.8V351.4M1399.5 345.4V351.5M1400.5 348.8V352.1M1401.5 346.2V354.5M1402.5 348.7V351.2M1403.5 349.3V351.8M1404.5 347.7V351.7M1405.5 347.4V351.9M1406.5 346.6V354.0M1407.5 344.2V355.1M1408.5 347.0V352.9M1409.5 348.5V353.8M1410.5 348.3V351.7M1411.5 349.3V351.7M1412.5 348.5V352.2M1413.5 349.0V351.9M1414.5 348.5V352.6M1415.5 346.2V352.0M1416.5 345.8V355.1M1417.5 345.4V355.6M1418.5 348.6V351.9M1419.5 347.3V352.1M1420.5 347.0V351.2M1421.5 344.2V351.5M1422.5 349.2V352.1M1423.5 348.4V352.0M1424.5 348.7V352.1M1425.5 348.2V352.1M1426.5 348.5V352.0M1427.5 349.2V351.2M1428.5 349.3V351.5M1429.5 349.2V352.0M1430.5 348.8V351.5M1431.5 340.0V360.4M1432.5 340.0V360.4M1433.5 348.2V352.1M1434.5 348.3V351.8M1435.5 348.9V351.5M1436.5 348.5V351.2M1437.5 343.7V357.2M1438.5 343.7V357.2M1439.5 348.7V352.0M1440.5 348.9V351.3M1441.5 348.4V351.3M1442.5 348.2V351.6M1443.5 348.5V352.1M1444.5 349.0V351.5M1445.5 349.1V351.7M1446.5 349.1V352.2M1447.5 348.4V351.3M1448.5 348.5V352.1M1449.5 338.9V361.5M1450.5 348.3V352.2M1451.5 348.7V351.3M1452.5 348.8V351.8M1453.5 347.8V351.7M1454.5 347.0V352.7M1455.5 348.2V351.9M1456.5 348.6V351.3M1457.5 348.7V351.6M1458.5 345.8V354.5M1459.5 346.6V354.1M1460.5 348.8V351.4M1461.5 347.4V352.4M1462.5 346.2V353.4M1463.5 349.1V351.3M1464.5 342.5V355.0M1465.5 345.9V355.7M1466.5 342.2V356.8M1467.5 349.3V352.0M1468.5 348.9V351.8M1469.5 348.9V351.6M1470.5 348.7V351.8M1471.5 348.3V351.3M1472.5 348.4V352.0M1473.5 348.6V351.5M1474.5 347.8V352.8M1475.5 349.0V351.7M1476.5 331.0V370.7M1477.5 348.4V351.1M1478.5 340.0V361.5M1479.5 340.0V361.5M1480.5 349.1V351.2M1481.5 346.2V354.7M1482.5 347.4V351.3M1483.5 345.4V354.9M1484.5 347.4V352.3M1485.5 347.0V352.7M1486.5 345.4V354.4M1487.5 344.2V357.7M1488.5 344.2V357.7M1489.5 348.6V351.8M1490.5 348.3V352.0M1491.5 349.3V351.6M1492.5 347.3V352.1M1493.5 347.0V351.7M1494.5 348.6V351.7M1495.5 348.5V352.1M1496.5 345.4V351.9M1497.5 348.2V353.8M1498.5 346.2V354.3M1499.5 345.8V354.8M1500.5 348.6V351.3M1501.5 348.8V351.4M1502.5 349.2V352.1M1503.5 346.2V353.8M1504.5 349.2V354.2M1505.5 346.6V353.8M1506.5 346.2V354.2M1507.5 348.9V352.1M1508.5 348.8V351.7M1509.5 348.8V352.0M1510.5 346.2V354.8M1511.5 348.5V351.2M1512.5 347.7V353.0M1513.5 347.4V352.9M1514.5 342.0V358.8M1515.5 342.0V358.8M1516.5 348.3V351.8M1517.5 344.8V355.0M1518.5 344.8V355.3M1519.5 345.8V353.6M1520.5 345.8V354.3M1521.5 342.0V359.4M1522.5 342.0V359.4M1523.5 347.8V352.4M1524.5 347.3V353.0M1525.5 347.0V353.3M1526.5 347.8V352.0M1527.5 348.6V354.2M1528.5 348.6V351.9M1529.5 348.7V355.6M1530.5 348.5V356.2M1531.5 349.1V351.3M1532.5 349.2V356.2M1533.5 348.9V352.2M1534.5 348.2V351.2M1535.5 349.0V352.6M1536.5 348.2V351.8M1537.5 347.7V354.6M1538.5 347.4V353.2M1539.5 345.4V355.2M1540.5 349.0V351.3M1541.5 349.3V353.0M1542.5 347.8V352.4M1543.5 347.4V351.3M1544.5 348.9V351.2M1545.5 347.0V353.1M1546.5 349.2V351.7M1547.5 348.7V351.6M1548.5 348.5V352.0M1549.5 346.6V351.4M1550.5 346.2V351.5M1551.5 348.3V351.1M1552.5 345.9V354.9M1553.5 345.4V355.4M1554.5 347.4V353.0M1555.5 349.2V352.1M1556.5 347.4V352.3M1557.5 347.4V352.6M1558.5 348.7V351.9M1559.5 342.7V358.8M1560.5 342.7V358.8M1561.5 348.6V351.3M1562.5 348.5V351.2M1563.5 345.8V353.9M1564.5 348.4V351.9M1565.5 348.3V351.6M1566.5 348.4V352.0M1567.5 349.0V351.3M1568.5 349.2V351.5M1569.5 348.2V351.8M1570.5 349.2V351.1M1571.5 344.8V351.1M1572.5 349.0V352.1M1573.5 349.0V351.5M1574.5 348.8V351.9M1575.5 348.9V351.4M1576.5 348.5V351.3M1577.5 348.6V351.8M1578.5 349.0V356.2M1579.5 349.0V352.0M1580.5 346.6V353.5M1581.5 342.0V358.8M1582.5 347.0V352.5M1583.5 345.4V355.2M1584.5 348.0V352.1M1585.5 347.8V351.4M1586.5 345.2V355.6M1587.5 345.2V355.6M1588.5 345.8V354.4M1589.5 345.9V354.9M1590.5 344.8V355.4M1591.5 344.2V351.5M1592.5 348.4V351.6M1593.5 347.0V351.5M1594.5 348.7V351.5M1595.5 342.9V355.9M1596.5 343.5V356.3M1597.5 344.3V357.3M1598.5 343.1V358.9M1599.5 348.8V352.1M1600.5 348.9V351.9M1601.5 348.7V351.2M1602.5 348.7V351.3M1603.5 348.4V351.8M1604.5 343.1V357.7M1605.5 343.1V357.7M1606.5 348.2V351.8M1607.5 348.6V351.2M1608.5 346.6V352.1M1609.5 348.6V353.4M1610.5 348.4V353.8M1611.5 344.8V355.5M1612.5 344.2V356.1M1613.5 337.9V362.5M1614.5 337.9V362.5M1615.5 348.4V352.1M1616.5 348.5V351.5M1617.5 345.2V356.4M1618.5 344.7V356.7M1619.5 345.3V354.1M1620.5 344.7V356.6M1621.5 344.5V355.2M1622.5 345.1V353.9M1623.5 344.8V355.2M1624.5 348.2V351.7M1625.5 349.0V351.2M1626.5 348.7V351.8M1627.5 349.1V355.6M1628.5 349.1V351.4M1629.5 347.4V353.4M1630.5 348.7V351.7M1631.5 349.1V351.6M1632.5 348.3V351.3M1633.5 348.8V351.3M1634.5 343.1V358.8M1635.5 343.1V358.8M1636.5 346.2V354.0M1637.5 347.3V351.8M1638.5 347.0V352.0M1639.5 348.6V351.2M1640.5 348.8V351.6M1641.5 347.0V353.4M1642.5 349.0V351.2M1643.5 349.1V351.7M1644.5 345.9V354.7M1645.5 345.4V355.2M1646.5 348.5V351.4M1647.5 348.9V351.6M1648.5 349.1V351.7M1649.5 349.2V352.0M1650.5 349.2V351.4M1651.5 349.0V351.2M1652.5 349.0V351.4M1653.5 348.9V352.0M1654.5 349.2V351.3M1655.5 344.2V357.3M1656.5 344.2V357.3M1657.5 348.5V356.2M1658.5 349.1V351.5M1659.5 348.9V355.6M1660.5 348.2V354.6M1661.5 349.3V353.4M1662.5 349.2V351.4M1663.5 348.5V351.3M1664.5 348.0V351.8M1665.5 347.3V353.2M1666.5 347.0V353.5M1667.5 348.3V351.1M1668.5 344.2V354.6M1669.5 344.8V355.0M1670.5 348.2V351.5M1671.5 345.3V355.6M1672.5 344.8V356.2M1673.5 344.2V354.8M1674.5 347.4V352.7M1675.5 349.0V351.7M1676.5 349.2V352.1M1677.5 344.8V354.0M1678.5 348.6V352.0M1679.5 349.2V351.4M1680.5 348.7V351.4M1681.5 342.0V360.9M1682.5 342.0V360.9M1683.5 349.1V352.0M1684.5 344.2V357.7M1685.5 344.2V357.7M1686.5 346.6V353.2M1687.5 344.2V357.0M1688.5 346.6V353.6M1689.5 347.0V353.4M1690.5 344.8V351.8M1691.5 344.2V352.0M1692.5 345.4V355.0M1693.5 348.2V351.4M1694.5 348.9V353.4M1695.5 348.2V351.6M1696.5 349.0V351.9M1697.5 344.2V355.6M1698.5 348.8V351.4M1699.5 344.8V356.0M1700.5 344.2V356.7M1701.5 345.9V351.4M1702.5 345.4V351.6M1703.5 348.3V351.5M1704.5 344.8V356.3M1705.5 348.2V352.1M1706.5 349.3V351.9M1707.5 348.7V352.0M1708.5 337.9V363.6M1709.5 337.9V363.6M1710.5 348.3V352.0M1711.5 341.0V358.8M1712.5 341.0V358.8M1713.5 348.3V352.0M1714.5 348.5V351.4M1715.5 348.4V351.4M1716.5 349.2V351.2M1717.5 348.3V352.2M1718.5 338.9V361.9M1719.5 338.9V361.9M1720.5 348.4V351.7M1721.5 349.0V351.6M1722.5 348.6V351.7M1723.5 348.6V352.2M1724.5 348.9V351.1M1725.5 349.2V351.6M1726.5 345.2V354.9M1727.5 342.7V359.7M1728.5 344.2V358.7M1729.5 349.2V351.9M1730.5 346.2V354.6M1731.5 349.0V352.1M1732.5 345.4V354.9M1733.5 344.8V355.4M1734.5 344.2V356.0M1735.5 348.5V351.4M1736.5 349.3V351.4M1737.5 346.6V353.3M1738.5 347.2V357.7M1739.5 348.5V351.7M1740.5 348.7V352.1M1741.5 349.0V351.7M1742.5 348.4V351.3M1743.5 348.3V351.1M1744.5 348.3V351.3M1745.5 345.4V354.2M1746.5 348.7V351.2M1747.5 348.7V351.3M1748.5 348.4V351.3M1749.5 346.2V354.4M1750.5 348.6V352.0M1751.5 348.9V352.0M1752.5 349.0V351.9M1753.5 348.4V351.7M1754.5 349.0V351.7M1755.5 348.4V352.1M1756.5 348.6V351.2M1757.5 346.2V353.3M1758.5 345.8V353.6M1759.5 348.3V351.1M1760.5 349.2V351.6M1761.5 347.2V355.6M1762.5 347.2V355.6M1763.5 347.2V355.6M1764.5 336.8V355.2M1765.5 336.8V355.2M1766.5 280.8V355.2M1767.5 347.4V353.1M1768.5 347.0V353.1M1769.5 348.3V352.1M1770.5 346.2V354.6M1771.5 348.2V351.1M1772.5 347.5V353.7M1773.5 347.8V355.9M1774.5 345.4V353.3M1775.5 347.0V353.3M1776.5 346.8V354.3M1777.5 346.5V356.6M1778.5 347.3V356.7M1779.5 347.7V353.4M1780.5 348.5V351.1M1781.5 348.6V352.0M1782.5 348.0V351.5M1783.5 347.7V352.3M1784.5 348.4V353.2M1785.5 347.7V352.6M1786.5 348.7V354.3M1787.5 333.7V354.6M1788.5 347.2V353.1M1789.5 347.9V353.4M1790.5 347.6V353.6M1791.5 347.8V353.7M1792.5 347.1V353.4M1793.5 348.4V351.1M1794.5 321.8V354.6M1795.5 321.8V354.6M1796.5 349.0V351.9M1797.5 348.5V351.7M1798.5 348.2V351.5M1799.5 347.8V356.5M1800.5 348.2V354.8M1801.5 346.6V355.7M1802.5 347.6V353.6M1803.5 347.8V356.0M1804.5 348.6V356.1M1805.5 347.4V353.8M1806.5 334.7V357.7M1807.5 344.2V357.7M1808.5 344.2V357.7M1809.5 348.6V353.8M1810.5 347.3V357.5M1811.5 348.1V355.5M1812.5 349.1V351.5M1813.5 348.7V351.6" stroke="#2297f4" stroke-width="1.100" fill="none"/><path d="M473 349.96L479 350.12L485 350.27L491 350.22L497 350.08L503 350.06L509 350.24L515 350.40L521 350.36L527 350.20L533 350.16L539 350.31L545 350.43L551 350.34L557 350.14L563 350.08L569 350.20L575 350.30L581 350.20L587 350.01L593 349.97L599 350.12L605 350.26L611 350.20L617 350.04L623 350.04L629 350.22L635 350.38L641 350.33L647 350.17L653 350.16L659 350.32L665 350.44L671 350.35L677 350.16L683 350.11L689 350.24L695 350.33L701 350.22L707 350.02L713 349.98L719 350.13L725 350.25L731 350.17L737 350.01L743 350.02L749 350.21L755 350.35L761 350.29L767 350.15L773 350.15L779 350.33L785 350.45L791 350.35L797 350.17L803 350.14L809 350.27L815 350.36L821 350.23L827 350.04L833 350.00L839 350.15L845 350.25L851 350.15L857 349.99L863 350.00L869 350.19L875 350.33L881 350.26L887 350.12L893 350.14L899 350.33L905 350.45L911 350.35L917 350.18L923 350.16L929 350.31L935 350.39L941 350.25L947 350.06L953 350.03L959 350.17L965 350.26L971 350.14L977 349.98L983 349.99L989 350.18L995 350.30L1001 350.22L1007 350.08L1013 350.12L1019 350.32L1025 350.43L1031 350.33L1037 350.17L1043 350.18L1049 350.34L1055 350.41L1061 350.27L1067 350.08L1073 350.06L1079 350.21L1085 350.27L1091 350.14L1097 349.97L1103 349.99L1109 350.17L1115 350.28L1121 350.18L1127 350.05L1133 350.10L1139 350.30L1145 350.41L1151 350.31L1157 350.17L1163 350.19L1169 350.36L1175 350.43L1181 350.29L1187 350.10L1193 350.10L1199 350.24L1205 350.30L1211 350.15L1217 349.97L1223 350.00L1229 350.17L1235 350.26L1241 350.15L1247 350.02L1253 350.08L1259 350.28L1265 350.39L1271 350.28L1277 350.15L1283 350.19L1289 350.37L1295 350.44L1301 350.30L1307 350.12L1313 350.13L1319 350.28L1325 350.32L1331 350.16L1337 349.99L1343 350.01L1349 350.18L1355 350.25L1361 350.12L1367 349.99L1373 350.06L1379 350.26L1385 350.36L1391 350.25L1397 350.13L1403 350.19L1409 350.38L1415 350.44L1421 350.30L1427 350.14L1433 350.16L1439 350.31L1445 350.34L1451 350.17L1457 350.00L1463 350.03L1469 350.19L1475 350.24L1481 350.10L1487 349.97L1493 350.04L1499 350.25L1505 350.33L1511 350.21L1517 350.10L1523 350.18L1529 350.38L1535 350.44L1541 350.30L1547 350.15L1553 350.19L1559 350.35L1565 350.37L1571 350.19L1577 350.02L1583 350.06L1589 350.22L1595 350.25L1601 350.09L1607 349.96L1613 350.03L1619 350.23L1625 350.30L1631 350.18L1637 350.07L1643 350.17L1649 350.37L1655 350.43L1661 350.28L1667 350.15L1673 350.22L1679 350.38L1685 350.39L1691 350.21L1697 350.05L1703 350.09L1709 350.24L1715 350.26L1721 350.09L1727 349.95L1733 350.03L1739 350.22L1745 350.27L1751 350.14L1757 350.04L1763 350.15L1769 350.35L1775 350.40L1781 350.26L1787 350.15L1793 350.23L1799 350.40L1805 350.41L1811 350.23" stroke="#7b757c" stroke-width="3.000" fill="none"/><rect x="473.5" y="156.5" width="1340" height="298" fill="none" stroke="#c4c4c4" stroke-width="1"/><path d="M1037.800 512.600H1052.800" stroke="#2297f4" stroke-width="3"/><path d="M1144 512.600H1158.800" stroke="#9e8680" stroke-width="3"/></svg>
<span class="t" style="left:469.95px;top:461.00px;font-size:13.1px;color:#000;transform:scaleX(0.9750);">0</span>
<span class="t" style="left:546.49px;top:461.00px;font-size:13.1px;color:#000;transform:scaleX(0.9750);">10</span>
<span class="t" style="left:626.59px;top:461.00px;font-size:13.1px;color:#000;transform:scaleX(0.9750);">20</span>
<span class="t" style="left:706.68px;top:461.00px;font-size:13.1px;color:#000;transform:scaleX(0.9750);">30</span>
<span class="t" style="left:786.78px;top:461.00px;font-size:13.1px;color:#000;transform:scaleX(0.9750);">40</span>
<span class="t" style="left:866.87px;top:461.00px;font-size:13.1px;color:#000;transform:scaleX(0.9750);">50</span>
<span class="t" style="left:946.97px;top:461.00px;font-size:13.1px;color:#000;transform:scaleX(0.9750);">60</span>
<span class="t" style="left:1027.06px;top:461.00px;font-size:13.1px;color:#000;transform:scaleX(0.9750);">70</span>
<span class="t" style="left:1107.16px;top:461.00px;font-size:13.1px;color:#000;transform:scaleX(0.9750);">80</span>
<span class="t" style="left:1187.25px;top:461.00px;font-size:13.1px;color:#000;transform:scaleX(0.9750);">90</span>
<span class="t" style="left:1263.79px;top:461.00px;font-size:13.1px;color:#000;transform:scaleX(0.9750);">100</span>
<span class="t" style="left:1344.36px;top:461.00px;font-size:13.1px;color:#000;transform:scaleX(0.9750);">110</span>
<span class="t" style="left:1423.98px;top:461.00px;font-size:13.1px;color:#000;transform:scaleX(0.9750);">120</span>
<span class="t" style="left:1504.08px;top:461.00px;font-size:13.1px;color:#000;transform:scaleX(0.9750);">130</span>
<span class="t" style="left:1584.17px;top:461.00px;font-size:13.1px;color:#000;transform:scaleX(0.9750);">140</span>
<span class="t" style="left:1664.27px;top:461.00px;font-size:13.1px;color:#000;transform:scaleX(0.9750);">150</span>
<span class="t" style="left:1744.36px;top:461.00px;font-size:13.1px;color:#000;transform:scaleX(0.9750);">160</span>
<span class="t" style="left:461.90px;top:410.00px;font-size:13.1px;color:#000;transform:scaleX(0.9750);">5</span>
<span class="t" style="left:454.79px;top:313.00px;font-size:13.1px;color:#000;transform:scaleX(0.9750);">10</span>
<span class="t" style="left:454.79px;top:216.00px;font-size:13.1px;color:#000;transform:scaleX(0.9750);">15</span>
<span class="t" style="left:436.600px;top:305px;font-size:13.100px;color:#000;transform:translate(-50%,-50%) rotate(-90deg) scaleX(0.985);transform-origin:50% 50%;">Frametime [ms]</span>
<span class="t" style="left:1090.50px;top:484.00px;font-size:13.1px;color:#000;transform:scaleX(1.0069);">Recording time [s]</span>
<span class="t" style="left:1058.50px;top:507.00px;font-size:12.3px;color:#000;transform:scaleX(0.9457);">Frametimes</span>
<span class="t" style="left:1164.40px;top:507.00px;font-size:12.3px;color:#000;transform:scaleX(0.9701);">Moving average</span>
<span class="t" style="left:425.90px;top:484.00px;font-size:9.3px;color:#6e6e6e;transform:scaleX(0.9501);">Y-Axis scale</span>
<span class="t" style="left:425.50px;top:500.00px;font-size:12.6px;color:#2b2b2b;transform:scaleX(0.9374);">Full fit</span>
<svg style="left:501px;top:503px" width="10" height="6" viewBox="0 0 10 6"><path d="M1 1h7.800L4.900 5z" fill="#6a6a6a"/></svg>
<div class="b" style="left:425px;top:519px;width:85px;height:1px;background:#6b6b6b;"></div>
<svg style="left:0;top:540px" width="1300" height="220" viewBox="0 540 1300 220"><path d="M534.5 558.500V713.500M652.5 558.500V713.500M771.5 558.500V713.500M889.5 558.500V713.500M1007.5 558.500V713.500M1125.5 558.500V713.500" stroke="#dadada" stroke-width="1" fill="none"/><rect x="534.2" y="560.40" width="574.99" height="12.900" fill="#f07c20"/><rect x="534.2" y="577.72" width="567.42" height="12.900" fill="#f07c20"/><rect x="534.2" y="595.04" width="559.85" height="12.900" fill="#f07c20"/><rect x="534.2" y="612.36" width="552.76" height="12.900" fill="#f07c20"/><rect x="534.2" y="629.68" width="540.94" height="12.900" fill="#f07c20"/><rect x="534.2" y="647.00" width="552.76" height="12.900" fill="#f07c20"/><rect x="534.2" y="664.32" width="538.10" height="12.900" fill="#f07c20"/><rect x="534.2" y="681.64" width="532.43" height="12.900" fill="#f07c20"/><rect x="534.2" y="698.96" width="493.18" height="12.900" fill="#f07c20"/></svg>
<span class="t" style="left:427.20px;top:562.00px;font-size:12.6px;color:#1c1c1c;transform:scaleX(0.985);">P95</span>
<span class="t" style="left:1114.99px;top:562.00px;font-size:12.2px;color:#2b2b2b;font-weight:bold;transform:scaleX(0.985);">121.6</span>
<span class="t" style="left:427.20px;top:579.00px;font-size:12.6px;color:#1c1c1c;transform:scaleX(0.985);">Average</span>
<span class="t" style="left:1107.42px;top:579.00px;font-size:12.2px;color:#2b2b2b;font-weight:bold;transform:scaleX(0.985);">120</span>
<span class="t" style="left:427.20px;top:597.00px;font-size:12.6px;color:#1c1c1c;transform:scaleX(0.985);">P5</span>
<span class="t" style="left:1099.85px;top:596.00px;font-size:12.2px;color:#2b2b2b;font-weight:bold;transform:scaleX(0.985);">118.4</span>
<span class="t" style="left:427.20px;top:614.00px;font-size:12.6px;color:#1c1c1c;transform:scaleX(0.985);">P1</span>
<span class="t" style="left:1092.76px;top:614.00px;font-size:12.2px;color:#2b2b2b;font-weight:bold;transform:scaleX(0.985);">116.9</span>
<span class="t" style="left:427.20px;top:631.00px;font-size:12.6px;color:#1c1c1c;transform:scaleX(0.985);">1% Low Average</span>
<span class="t" style="left:1080.94px;top:631.00px;font-size:12.2px;color:#2b2b2b;font-weight:bold;transform:scaleX(0.985);">114.4</span>
<span class="t" style="left:427.20px;top:649.00px;font-size:12.6px;color:#1c1c1c;transform:scaleX(0.985);">1% Low Integral</span>
<span class="t" style="left:1092.76px;top:648.00px;font-size:12.2px;color:#2b2b2b;font-weight:bold;transform:scaleX(0.985);">116.9</span>
<span class="t" style="left:427.20px;top:666.00px;font-size:12.6px;color:#1c1c1c;transform:scaleX(0.985);">P0.2</span>
<span class="t" style="left:1078.10px;top:666.00px;font-size:12.2px;color:#2b2b2b;font-weight:bold;transform:scaleX(0.985);">113.8</span>
<span class="t" style="left:427.20px;top:683.00px;font-size:12.6px;color:#1c1c1c;transform:scaleX(0.985);">P0.1</span>
<span class="t" style="left:1072.43px;top:683.00px;font-size:12.2px;color:#2b2b2b;font-weight:bold;transform:scaleX(0.985);">112.6</span>
<span class="t" style="left:427.20px;top:701.00px;font-size:12.6px;color:#1c1c1c;transform:scaleX(0.985);">0.1% Low Average</span>
<span class="t" style="left:1033.18px;top:700.00px;font-size:12.2px;color:#2b2b2b;font-weight:bold;transform:scaleX(0.985);">104.3</span>
<span class="t" style="left:530.86px;top:721.00px;font-size:12.4px;color:#1c1c1c;transform:scaleX(0.9700);">0</span>
<span class="t" style="left:645.72px;top:721.00px;font-size:12.4px;color:#1c1c1c;transform:scaleX(0.9700);">25</span>
<span class="t" style="left:763.94px;top:721.00px;font-size:12.4px;color:#1c1c1c;transform:scaleX(0.9700);">50</span>
<span class="t" style="left:882.15px;top:721.00px;font-size:12.4px;color:#1c1c1c;transform:scaleX(0.9700);">75</span>
<span class="t" style="left:997.02px;top:721.00px;font-size:12.4px;color:#1c1c1c;transform:scaleX(0.9700);">100</span>
<span class="t" style="left:1115.23px;top:721.00px;font-size:12.4px;color:#1c1c1c;transform:scaleX(0.9700);">125</span>
<span class="t" style="left:771.30px;top:740.00px;font-size:12.2px;color:#2b2b2b;transform:scaleX(0.8850);">FPS</span>
<span class="t" style="left:836.50px;top:740.00px;font-size:12.2px;color:#2b2b2b;">ms</span>
<div class="b" style="left:802.6px;top:741.4000000000001px;width:25.800px;height:11px;border-radius:5.500px;background:#b9b9b9"></div>
<div class="b" style="left:796.90px;top:737.80px;width:17.400px;height:17.400px;border-radius:8.700px;background:#fafafa;box-shadow:0 1px 2px rgba(40,60,80,.42),0 0 1px rgba(40,60,80,.28)"></div>
<div class="b" style="left:412px;top:761px;width:1462px;height:55px;background:#ededed;"></div>
<span class="t" style="left:427.20px;top:783.00px;font-size:12.2px;color:#2b2b2b;transform:scaleX(0.9951);">Statistic parameter settings:</span>
<span class="t" style="left:641.50px;top:783.00px;font-size:12.2px;color:#2b2b2b;transform:scaleX(0.9839);">Additional graphs:</span>
<div class="b" style="left:592.3px;top:781.2px;width:4px;height:4px;border-radius:2px;background:#1c1c1c"></div>
<div class="b" style="left:592.3px;top:787px;width:4px;height:4px;border-radius:2px;background:#1c1c1c"></div>
<div class="b" style="left:592.3px;top:792.8px;width:4px;height:4px;border-radius:2px;background:#1c1c1c"></div>
<div class="b" style="left:752.6px;top:781.2px;width:4px;height:4px;border-radius:2px;background:#1c1c1c"></div>
<div class="b" style="left:752.6px;top:787px;width:4px;height:4px;border-radius:2px;background:#1c1c1c"></div>
<div class="b" style="left:752.6px;top:792.8px;width:4px;height:4px;border-radius:2px;background:#1c1c1c"></div>
<span class="t" style="left:1338.30px;top:781.00px;font-size:12.2px;color:#2b2b2b;transform:scaleX(0.9780);">Show aggregation:</span>
<div class="b" style="left:1453px;top:783.0px;width:25.800px;height:11px;border-radius:5.500px;background:#b9b9b9"></div>
<div class="b" style="left:1447.30px;top:779.40px;width:17.400px;height:17.400px;border-radius:8.700px;background:#fafafa;box-shadow:0 1px 2px rgba(40,60,80,.42),0 0 1px rgba(40,60,80,.28)"></div>
<span class="t" style="left:1491.80px;top:781.00px;font-size:12.2px;color:#2b2b2b;">Custom title:</span>
<div class="b" style="left:1574.4px;top:783.0px;width:25.800px;height:11px;border-radius:5.500px;background:#b9b9b9"></div>
<div class="b" style="left:1568.70px;top:779.40px;width:17.400px;height:17.400px;border-radius:8.700px;background:#fafafa;box-shadow:0 1px 2px rgba(40,60,80,.42),0 0 1px rgba(40,60,80,.28)"></div>
<span class="t" style="left:1613.70px;top:781.00px;font-size:12.2px;color:#2b2b2b;transform:scaleX(0.9690);">Remove outliers:</span>
<div class="b" style="left:1717px;top:783.0px;width:25.800px;height:11px;border-radius:5.500px;background:#b9b9b9"></div>
<div class="b" style="left:1711.30px;top:779.40px;width:17.400px;height:17.400px;border-radius:8.700px;background:#fafafa;box-shadow:0 1px 2px rgba(40,60,80,.42),0 0 1px rgba(40,60,80,.28)"></div>
<span class="t" style="left:1756.40px;top:781.00px;font-size:12.2px;color:#2b2b2b;transform:scaleX(0.9543);">Range slider:</span>
<div class="b" style="left:1840.4px;top:783.0px;width:25.800px;height:11px;border-radius:5.500px;background:#b9b9b9"></div>
<div class="b" style="left:1834.70px;top:779.40px;width:17.400px;height:17.400px;border-radius:8.700px;background:#fafafa;box-shadow:0 1px 2px rgba(40,60,80,.42),0 0 1px rgba(40,60,80,.28)"></div>
<div class="b" style="left:1281px;top:550px;width:75px;height:25px;background:#dddddd;"></div>
<span class="t" style="left:1292.00px;top:557.00px;font-size:12.2px;color:#1f1f1f;transform:scaleX(1.0092);">Stuttering</span>
<span class="t" style="left:1366.80px;top:557.00px;font-size:12.2px;color:#3a3a3a;transform:scaleX(0.9935);">Variances</span>
<span class="t" style="left:1442.90px;top:557.00px;font-size:12.2px;color:#3a3a3a;transform:scaleX(0.9687);">FPS thresholds</span>
<span class="t" style="left:1541.40px;top:557.00px;font-size:12.2px;color:#3a3a3a;transform:scaleX(0.9758);">Sensor data</span>
<div class="b" style="left:1279px;top:575px;width:595px;height:181px;background:#ededed;border:1px solid #a3a3a3;"></div>
<svg style="left:1295px;top:584.700px" width="20" height="20" viewBox="0 0 24 24"><path fill="#1c1c1c" d="M19.430 12.980c.040-.320.070-.640.070-.980s-.030-.660-.070-.980l2.110-1.650c.190-.150.240-.420.120-.640l-2-3.460c-.120-.220-.390-.300-.610-.220l-2.490 1c-.520-.400-1.080-.730-1.690-.980l-.380-2.650C14.460 2.180 14.250 2 14 2h-4c-.250 0-.460.180-.490.420l-.380 2.650c-.610.250-1.170.590-1.690.980l-2.490-1c-.230-.090-.490 0-.610.220l-2 3.460c-.130.220-.070.490.120.640l2.110 1.650c-.040.320-.070.650-.070.980s.030.660.070.980l-2.110 1.650c-.190.150-.240.420-.120.640l2 3.460c.120.220.390.300.610.220l2.490-1c.520.400 1.080.730 1.690.980l.380 2.650c.030.240.240.420.490.420h4c.250 0 .460-.180.490-.420l.380-2.650c.610-.250 1.170-.590 1.690-.980l2.490 1c.230.090.490 0 .610-.220l2-3.460c.120-.220.070-.490-.120-.640l-2.110-1.650zM12 15.500c-1.930 0-3.500-1.570-3.500-3.500s1.570-3.500 3.500-3.500 3.500 1.570 3.500 3.500-1.570 3.500-3.500 3.500z"/></svg>
<span class="t" style="left:1326.00px;top:587.00px;font-size:14.4px;color:#3a3a3a;transform:scaleX(0.9672);">Options</span>
<div class="b" style="left:1293.700px;top:637.5px;width:15px;height:15px;border-radius:7.500px;background:#2196f3"></div>
<span class="t" style="left:1313.00px;top:638.00px;font-size:14.4px;color:#2f2f2f;transform:scaleX(0.9657);-webkit-text-stroke:0.450px #2f2f2f;">Smooth:  167.32s (100%)</span>
<div class="b" style="left:1293.700px;top:658.2px;width:15px;height:15px;border-radius:7.500px;background:#ffb300"></div>
<span class="t" style="left:1313.00px;top:659.00px;font-size:14.4px;color:#2f2f2f;transform:scaleX(0.9322);-webkit-text-stroke:0.450px #2f2f2f;">Low FPS:  0s (0%)</span>
<div class="b" style="left:1293.700px;top:678.5px;width:15px;height:15px;border-radius:7.500px;background:#f60000"></div>
<span class="t" style="left:1313.00px;top:679.00px;font-size:14.4px;color:#2f2f2f;transform:scaleX(0.9687);-webkit-text-stroke:0.450px #2f2f2f;">Stuttering:  0s (0%)</span>
<div class="b" style="left:1589.1px;top:588.3000000000001px;width:154.800px;height:154.800px;border-radius:50%;background:#2196f3"></div>
<span class="t" style="left:12.00px;top:830.00px;font-size:12.2px;color:#2b2b2b;transform:scaleX(0.9531);">Capture Service:</span>
<span class="t" style="left:104.00px;top:830.00px;font-size:12.2px;color:#3ec83e;font-weight:bold;transform:scaleX(0.9121);">Ready</span>
<span class="t" style="left:157.20px;top:830.00px;font-size:12.2px;color:#2b2b2b;transform:scaleX(0.9290);">Overlay:</span>
<span class="t" style="left:205.00px;top:830.00px;font-size:12.2px;color:#3ec83e;font-weight:bold;transform:scaleX(0.8500);">On</span>
<span class="t" style="left:239.50px;top:830.00px;font-size:12.2px;color:#2b2b2b;transform:scaleX(0.9656);">Sensor Logging:</span>
<span class="t" style="left:331.00px;top:830.00px;font-size:12.2px;color:#3ec83e;font-weight:bold;transform:scaleX(0.8618);">On</span>
<span class="t" style="left:365.60px;top:830.00px;font-size:12.2px;color:#2b2b2b;transform:scaleX(0.9689);">Login Status:</span>
<span class="t" style="left:440.60px;top:830.00px;font-size:12.2px;color:#ff3b14;font-weight:bold;transform:scaleX(0.9162);">Not logged in</span>
<span class="t" style="left:569.70px;top:830.00px;font-size:12.2px;color:#2b2b2b;transform:scaleX(0.9428);">Resizable Bar:</span>
<span class="t" style="left:650.00px;top:830.00px;font-size:12.2px;color:#3ec83e;font-weight:bold;transform:scaleX(0.8559);">On</span>
<span class="t" style="left:680.00px;top:830.00px;font-size:12.2px;color:#2b2b2b;transform:scaleX(0.9513);">Win Game Mode:</span>
<span class="t" style="left:775.90px;top:830.00px;font-size:12.2px;color:#3ec83e;font-weight:bold;transform:scaleX(0.8736);">On</span>
<span class="t" style="left:811.20px;top:830.00px;font-size:12.2px;color:#2b2b2b;transform:scaleX(0.8903);">HAGS:</span>
<span class="t" style="left:850.60px;top:830.00px;font-size:12.2px;color:#3ec83e;font-weight:bold;transform:scaleX(0.8736);">On</span>
<span class="t" style="left:1828.00px;top:830.00px;font-size:12.2px;color:#2b2b2b;transform:scaleX(1.0053);">Version: 1.7.4</span>
<div class="b" style="left:528px;top:826px;width:1px;height:20px;background:#d4d4d4;"></div>
<svg style="left:539.700px;top:827.500px" width="17" height="17" viewBox="0 0 24 24"><path fill="#1b69c0" d="M21 10.120h-6.780l2.740-2.820c-2.730-2.700-7.150-2.800-9.880-.100-2.730 2.710-2.730 7.080 0 9.800 2.730 2.700 7.150 2.700 9.880 0 1.360-1.350 2.040-2.920 2.040-4.900h2c0 1.980-.880 4.550-2.640 6.290-3.510 3.480-9.210 3.480-12.720 0-3.500-3.470-3.530-9.110-.020-12.580 3.510-3.470 9.140-3.470 12.650 0L21 3v7.120M12.500 8v4.250l3.500 2.080-.72 1.210L11 13V8h1.500z"/></svg>
<div class="b" style="left:1808.500px;top:829.400px;width:13px;height:13px;border-radius:6.500px;background:#1a1a1a"></div>
<div class="b" style="left:1814.3px;top:835px;width:1.400000000000091px;height:4.2000000000000455px;background:#ededed;"></div>
<div class="b" style="left:1814.3px;top:832.3px;width:1.400000000000091px;height:1.5px;background:#ededed;"></div>
</div></div></body></html>
